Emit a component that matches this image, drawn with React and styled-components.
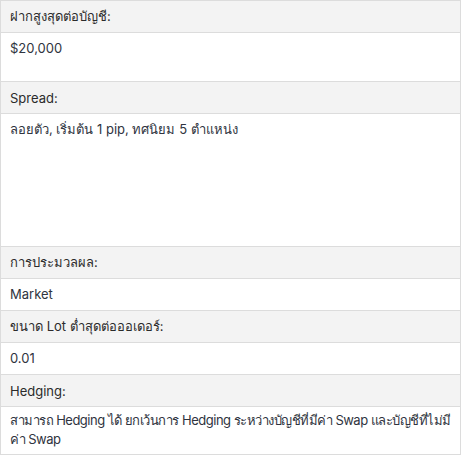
import React from 'react';
import styled, { createGlobalStyle } from 'styled-components';

const GlobalStyle = createGlobalStyle`
  html, body {
    margin: 0;
    padding: 0;
    background: #fff;
  }
  body {
    font-family: Inter, "Noto Sans", "DejaVu Sans", sans-serif;
    color: #333;
  }
`;

const Table = styled.div`
  width: 461px;
  box-sizing: border-box;
  border: 1px solid #dcdcdc;
  border-bottom: none;
  display: flex;
  flex-direction: column;
`;

const Label = styled.div`
  height: 32px;
  box-sizing: border-box;
  background: #f3f3f3;
  border-bottom: 1px solid #dcdcdc;
  padding: 0 9px;
  display: flex;
  align-items: center;
  font-size: 13px;
  font-weight: 400;
  color: #2b2b2b;
`;

const Value = styled.div`
  height: ${p => p.$h || 32}px;
  box-sizing: border-box;
  background: #fff;
  border-bottom: 1px solid #dcdcdc;
  padding: ${p => p.$pt || 6}px 6px 0 9px;
  font-size: 13px;
  line-height: 19px;
  color: #2f3440;
  letter-spacing: ${p => (p.$tight ? '-0.5px' : 'normal')};
  overflow: hidden;
`;

const Line = styled.span`
  display: block;
  white-space: nowrap;
`;

const rows = [
  { label: 'ฝากสูงสุดต่อบัญชี:', value: ['$20,000'], h: 49 },
  { label: 'Spread:', value: ['ลอยตัว, เริ่มต้น 1 pip, ทศนิยม 5 ตำแหน่ง'], h: 133 },
  { label: 'การประมวลผล:', value: ['Market'], h: 32 },
  { label: 'ขนาด Lot ต่ำสุดต่อออเดอร์:', value: ['0.01'], h: 32 },
  {
    label: 'Hedging:',
    value: [
      'สามารถ Hedging ได้ ยกเว้นการ Hedging ระหว่างบัญชีที่มีค่า Swap และบัญชีที่ไม่มี',
      'ค่า Swap',
    ],
    h: 48,
    pt: 4,
    tight: true,
  },
];

export default function App() {
  return (
    <>
      <GlobalStyle />
      <Table>
        {rows.map(r => (
          <React.Fragment key={r.label}>
            <Label>{r.label}</Label>
            <Value $h={r.h} $pt={r.pt} $tight={r.tight}>
              {r.value.map(l => <Line key={l}>{l}</Line>)}
            </Value>
          </React.Fragment>
        ))}
      </Table>
    </>
  );
}
